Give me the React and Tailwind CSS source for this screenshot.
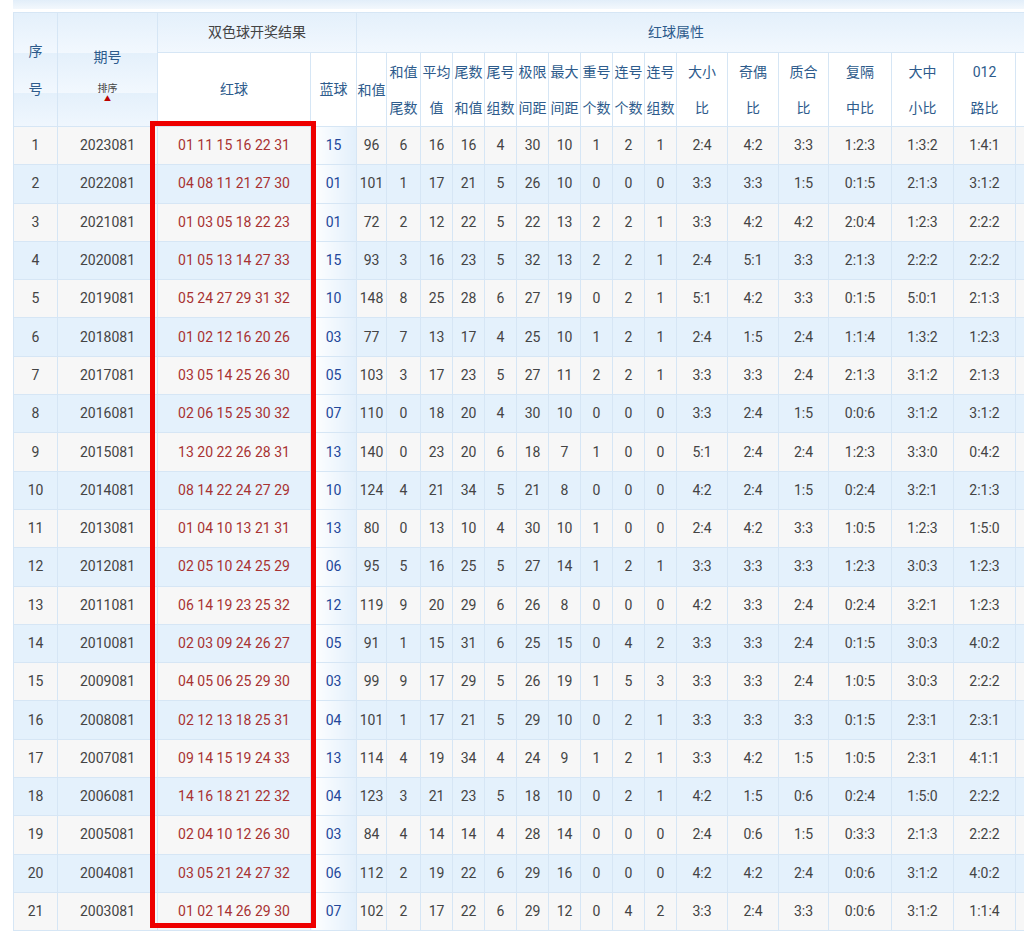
const rows = `1 2023081 01_11_15_16_22_31 15 96 6 16 16 4 30 10 1 2 1 2:4 4:2 3:3 1:2:3 1:3:2 1:4:1
2 2022081 04_08_11_21_27_30 01 101 1 17 21 5 26 10 0 0 0 3:3 3:3 1:5 0:1:5 2:1:3 3:1:2
3 2021081 01_03_05_18_22_23 01 72 2 12 22 5 22 13 2 2 1 3:3 4:2 4:2 2:0:4 1:2:3 2:2:2
4 2020081 01_05_13_14_27_33 15 93 3 16 23 5 32 13 2 2 1 2:4 5:1 3:3 2:1:3 2:2:2 2:2:2
5 2019081 05_24_27_29_31_32 10 148 8 25 28 6 27 19 0 2 1 5:1 4:2 3:3 0:1:5 5:0:1 2:1:3
6 2018081 01_02_12_16_20_26 03 77 7 13 17 4 25 10 1 2 1 2:4 1:5 2:4 1:1:4 1:3:2 1:2:3
7 2017081 03_05_14_25_26_30 05 103 3 17 23 5 27 11 2 2 1 3:3 3:3 2:4 2:1:3 3:1:2 2:1:3
8 2016081 02_06_15_25_30_32 07 110 0 18 20 4 30 10 0 0 0 3:3 2:4 1:5 0:0:6 3:1:2 3:1:2
9 2015081 13_20_22_26_28_31 13 140 0 23 20 6 18 7 1 0 0 5:1 2:4 2:4 1:2:3 3:3:0 0:4:2
10 2014081 08_14_22_24_27_29 10 124 4 21 34 5 21 8 0 0 0 4:2 2:4 1:5 0:2:4 3:2:1 2:1:3
11 2013081 01_04_10_13_21_31 13 80 0 13 10 4 30 10 1 0 0 2:4 4:2 3:3 1:0:5 1:2:3 1:5:0
12 2012081 02_05_10_24_25_29 06 95 5 16 25 5 27 14 1 2 1 3:3 3:3 3:3 1:2:3 3:0:3 1:2:3
13 2011081 06_14_19_23_25_32 12 119 9 20 29 6 26 8 0 0 0 4:2 3:3 2:4 0:2:4 3:2:1 1:2:3
14 2010081 02_03_09_24_26_27 05 91 1 15 31 6 25 15 0 4 2 3:3 3:3 2:4 0:1:5 3:0:3 4:0:2
15 2009081 04_05_06_25_29_30 03 99 9 17 29 5 26 19 1 5 3 3:3 3:3 2:4 1:0:5 3:0:3 2:2:2
16 2008081 02_12_13_18_25_31 04 101 1 17 21 5 29 10 0 2 1 3:3 3:3 3:3 0:1:5 2:3:1 2:3:1
17 2007081 09_14_15_19_24_33 13 114 4 19 34 4 24 9 1 2 1 3:3 4:2 1:5 1:0:5 2:3:1 4:1:1
18 2006081 14_16_18_21_22_32 04 123 3 21 23 5 18 10 0 2 1 4:2 1:5 0:6 0:2:4 1:5:0 2:2:2
19 2005081 02_04_10_12_26_30 03 84 4 14 14 4 28 14 0 0 0 2:4 0:6 1:5 0:3:3 2:1:3 2:2:2
20 2004081 03_05_21_24_27_32 06 112 2 19 22 6 29 16 0 0 0 4:2 4:2 2:4 0:0:6 3:1:2 4:0:2
21 2003081 01_02_14_26_29_30 07 102 2 17 22 6 29 12 0 4 2 3:3 2:4 3:3 0:0:6 3:1:2 1:1:4`
  .split("\n")
  .map((l) => l.split(" "));

const widths = [44, 100, 153, 46, 30, 34, 32, 32, 32, 32, 32, 32, 32, 32, 51, 51, 50, 63, 62, 62, 40];
const total = widths.reduce((a, b) => a + b, 0);
const sub = [
  ["和值"],
  ["和值", "尾数"],
  ["平均", "值"],
  ["尾数", "和值"],
  ["尾号", "组数"],
  ["极限", "间距"],
  ["最大", "间距"],
  ["重号", "个数"],
  ["连号", "个数"],
  ["连号", "组数"],
  ["大小", "比"],
  ["奇偶", "比"],
  ["质合", "比"],
  ["复隔", "中比"],
  ["大中", "小比"],
  ["012", "路比"],
  [""],
];

const bd = "border border-[#d6e6f5]";

export default function App() {
  return (
    <div
      className="relative h-[931px] w-[1024px] overflow-hidden bg-white text-[#444]"
      style={{ fontFamily: "Roboto, 'Noto Sans CJK SC', sans-serif" }}
    >
      <div className="h-[9px] ml-[13px] bg-gradient-to-b from-[#e2eef9] to-[#f3f8fd]" />
      <table className="ml-[13px] mt-[3px] table-fixed border-collapse text-[14px]" style={{ width: total }}>
        <colgroup>
          {widths.map((w, i) => (
            <col key={i} style={{ width: w }} />
          ))}
        </colgroup>
        <thead className="text-[#2d5b8c]">
          <tr className="h-[40px] bg-gradient-to-b from-[#e4f0fb] to-[#f2f8fe]">
            <th rowSpan={2} className={`${bd} font-normal`}>
              <div className="leading-[38px]">序<br />号</div>
            </th>
            <th rowSpan={2} className={`${bd} font-normal`}>
              <div className="leading-[34px] pt-[4px]">期号</div>
              <div className="text-[10px] leading-[14px] text-[#444] mt-[8px]">排序</div>
              <div className="text-[7px] leading-[7px] text-[#b00]">▲</div>
            </th>
            <th colSpan={2} className={`${bd} font-normal text-[#444]`}>双色球开奖结果</th>
            <th colSpan={17} className={`${bd} font-normal pr-[60px]`}>红球属性</th>
          </tr>
          <tr className="h-[74px] bg-white">
            <th className={`${bd} font-normal`}>红球</th>
            <th className={`${bd} font-normal`}>蓝球</th>
            {sub.map((s, i) => (
              <th key={i} className={`${bd} p-0 font-normal leading-[36px] whitespace-nowrap`}>
                {s.map((t, j) => (
                  <div key={j}>{t}</div>
                ))}
              </th>
            ))}
          </tr>
        </thead>
        <tbody>
          {rows.map((r, i) => (
            <tr key={i} className={`h-[38.3px] ${i % 2 ? "bg-[#e4f1fc]" : "bg-[#f7f7f7]"}`}>
              {r.map((c, j) => (
                <td
                  key={j}
                  className={`${bd} p-0 text-center whitespace-nowrap ${
                    j === 2
                      ? "text-[#a83232]"
                      : j === 3
                      ? "text-[#23479a] bg-gradient-to-r from-white to-[#e2effb]"
                      : ""
                  }`}
                >
                  {c.replaceAll("_", " ")}
                </td>
              ))}
              <td className={bd}></td>
            </tr>
          ))}
        </tbody>
      </table>
      <div className="absolute left-[150px] top-[121px] h-[807px] w-[166px] border-[5px] border-[#ee0000]" />
    </div>
  );
}
